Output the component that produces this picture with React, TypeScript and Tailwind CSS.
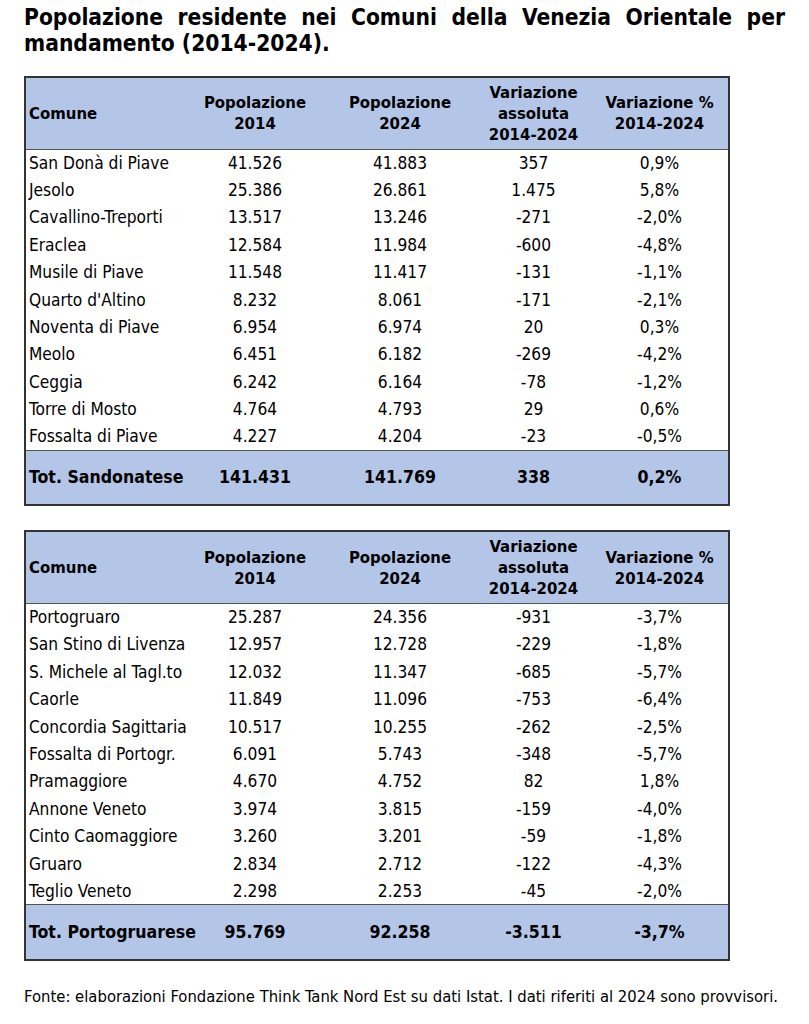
import React from "react";

type Row = [string, string, string, string, string];

const sandonatese: Row[] = [
  ["San Donà di Piave", "41.526", "41.883", "357", "0,9%"],
  ["Jesolo", "25.386", "26.861", "1.475", "5,8%"],
  ["Cavallino-Treporti", "13.517", "13.246", "-271", "-2,0%"],
  ["Eraclea", "12.584", "11.984", "-600", "-4,8%"],
  ["Musile di Piave", "11.548", "11.417", "-131", "-1,1%"],
  ["Quarto d'Altino", "8.232", "8.061", "-171", "-2,1%"],
  ["Noventa di Piave", "6.954", "6.974", "20", "0,3%"],
  ["Meolo", "6.451", "6.182", "-269", "-4,2%"],
  ["Ceggia", "6.242", "6.164", "-78", "-1,2%"],
  ["Torre di Mosto", "4.764", "4.793", "29", "0,6%"],
  ["Fossalta di Piave", "4.227", "4.204", "-23", "-0,5%"],
];

const portogruarese: Row[] = [
  ["Portogruaro", "25.287", "24.356", "-931", "-3,7%"],
  ["San Stino di Livenza", "12.957", "12.728", "-229", "-1,8%"],
  ["S. Michele al Tagl.to", "12.032", "11.347", "-685", "-5,7%"],
  ["Caorle", "11.849", "11.096", "-753", "-6,4%"],
  ["Concordia Sagittaria", "10.517", "10.255", "-262", "-2,5%"],
  ["Fossalta di Portogr.", "6.091", "5.743", "-348", "-5,7%"],
  ["Pramaggiore", "4.670", "4.752", "82", "1,8%"],
  ["Annone Veneto", "3.974", "3.815", "-159", "-4,0%"],
  ["Cinto Caomaggiore", "3.260", "3.201", "-59", "-1,8%"],
  ["Gruaro", "2.834", "2.712", "-122", "-4,3%"],
  ["Teglio Veneto", "2.298", "2.253", "-45", "-2,0%"],
];

const font = "font-['DejaVu_Sans',sans-serif] font-stretch-condensed";

function PopTable({ rows, total }: { rows: Row[]; total: Row }) {
  return (
    <table className="w-[704px] table-fixed border-collapse border-2 border-[#333] text-[17.2px] text-black">
      <colgroup>
        <col className="w-[161px]" />
        <col className="w-[138px]" />
        <col className="w-[152px]" />
        <col className="w-[115px]" />
        <col className="w-[138px]" />
      </colgroup>
      <thead>
        <tr className="h-[72px] bg-[#b4c6e7] border-b border-[#555] text-[16.6px] font-bold leading-[21px]">
          <th className="pl-[3px] text-left">Comune</th>
          <th>Popolazione<br />2014</th>
          <th>Popolazione<br />2024</th>
          <th>Variazione<br />assoluta<br />2014-2024</th>
          <th>Variazione %<br />2014-2024</th>
        </tr>
      </thead>
      <tbody>
        {rows.map((r) => (
          <tr key={r[0]} className="h-[27.4px] leading-[20px]">
            <td className="pl-[3px] whitespace-nowrap">{r[0]}</td>
            <td className="text-center">{r[1]}</td>
            <td className="text-center">{r[2]}</td>
            <td className="text-center">{r[3]}</td>
            <td className="text-center">{r[4]}</td>
          </tr>
        ))}
        <tr className="h-[55px] bg-[#b4c6e7] border-t border-[#555] text-[17.6px] font-bold">
          <td className="pl-[3px] whitespace-nowrap">{total[0]}</td>
          <td className="text-center">{total[1]}</td>
          <td className="text-center">{total[2]}</td>
          <td className="text-center">{total[3]}</td>
          <td className="text-center">{total[4]}</td>
        </tr>
      </tbody>
    </table>
  );
}

export default function App() {
  return (
    <div className={`w-[809px] h-[1024px] bg-white ${font}`}>
      <div className="pl-[24px] pr-[24px] pt-[4px]">
        <h1 className="text-[22.6px] font-bold leading-[26px] text-justify">
          Popolazione residente nei Comuni della Venezia Orientale per mandamento (2014-2024).
        </h1>
        <div className="mt-[20px] flex flex-col gap-[24px]">
          <PopTable rows={sandonatese} total={["Tot. Sandonatese", "141.431", "141.769", "338", "0,2%"]} />
          <PopTable rows={portogruarese} total={["Tot. Portogruarese", "95.769", "92.258", "-3.511", "-3,7%"]} />
        </div>
        <p className="mt-[24px] text-[16.5px]">
          Fonte: elaborazioni Fondazione Think Tank Nord Est su dati Istat. I dati riferiti al 2024 sono provvisori.
        </p>
      </div>
    </div>
  );
}
